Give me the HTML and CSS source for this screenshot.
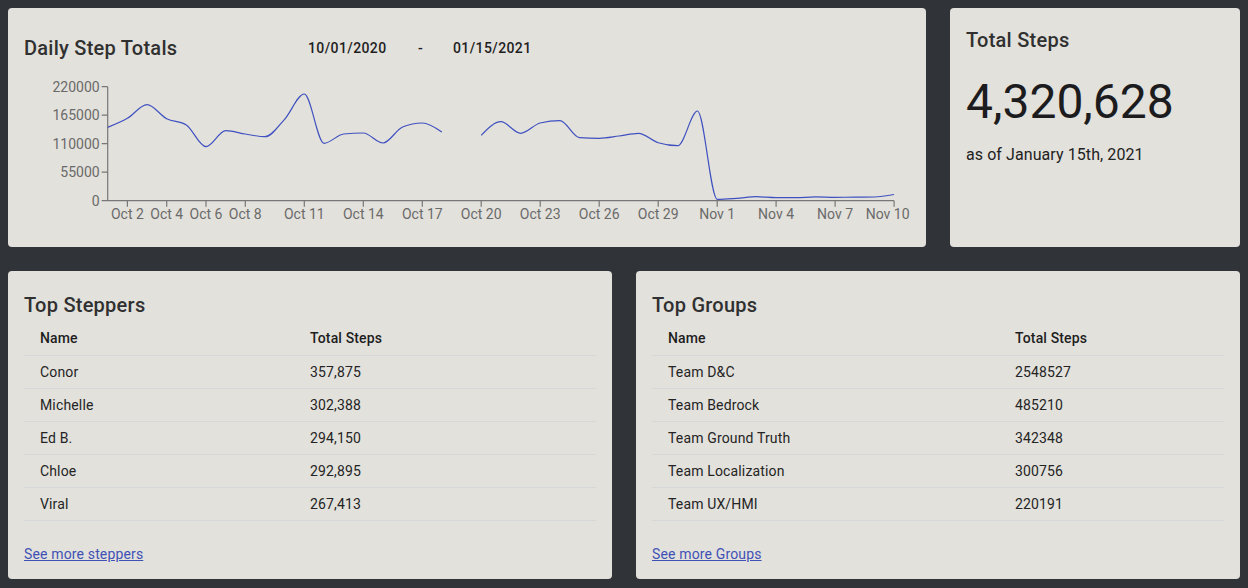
FILE: index.html
```html
<!DOCTYPE html>
<html lang="en">
<head>
<meta charset="utf-8">
<title>Step Dashboard</title>
<link rel="stylesheet" href="styles.css">
</head>
<body>
<main class="dash">
  <div class="row row-top">
    <section class="card card-chart">
      <header class="chart-head">
        <h2 class="card-title head-title">Daily Step Totals</h2>
        <div class="range">
          <span class="date date-from">10/01/2020</span>
          <span class="range-sep">-</span>
          <span class="date">01/15/2021</span>
        </div>
      </header>
      <svg class="chart" viewBox="8 60 918 187" width="918" height="187" xmlns="http://www.w3.org/2000/svg">
        <g class="axis">
          <line x1="107.7" y1="86.7" x2="107.7" y2="200.7"/>
          <line x1="107.7" y1="200.7" x2="894.1" y2="200.7"/>
          <line x1="101.7" y1="86.7" x2="107.7" y2="86.7"/>
          <line x1="101.7" y1="115.2" x2="107.7" y2="115.2"/>
          <line x1="101.7" y1="143.7" x2="107.7" y2="143.7"/>
          <line x1="101.7" y1="172.2" x2="107.7" y2="172.2"/>
          <line x1="101.7" y1="200.7" x2="107.7" y2="200.7"/>
          <line x1="127.4" y1="200.7" x2="127.4" y2="206.7"/>
          <line x1="166.7" y1="200.7" x2="166.7" y2="206.7"/>
          <line x1="206" y1="200.7" x2="206" y2="206.7"/>
          <line x1="245.3" y1="200.7" x2="245.3" y2="206.7"/>
          <line x1="304.3" y1="200.7" x2="304.3" y2="206.7"/>
          <line x1="363.3" y1="200.7" x2="363.3" y2="206.7"/>
          <line x1="422.3" y1="200.7" x2="422.3" y2="206.7"/>
          <line x1="481.2" y1="200.7" x2="481.2" y2="206.7"/>
          <line x1="540.2" y1="200.7" x2="540.2" y2="206.7"/>
          <line x1="599.2" y1="200.7" x2="599.2" y2="206.7"/>
          <line x1="658.2" y1="200.7" x2="658.2" y2="206.7"/>
          <line x1="717.2" y1="200.7" x2="717.2" y2="206.7"/>
          <line x1="776.1" y1="200.7" x2="776.1" y2="206.7"/>
          <line x1="835.1" y1="200.7" x2="835.1" y2="206.7"/>
          <line x1="894.1" y1="200.7" x2="894.1" y2="206.7"/>
        </g>
        <g class="ylabels">
          <text x="99.7" y="91.7">220000</text>
          <text x="99.7" y="120.2">165000</text>
          <text x="99.7" y="148.7">110000</text>
          <text x="99.7" y="177.2">55000</text>
          <text x="99.7" y="205.7">0</text>
        </g>
        <g class="xlabels">
          <text x="127.4" y="218.6">Oct 2</text>
          <text x="166.7" y="218.6">Oct 4</text>
          <text x="206" y="218.6">Oct 6</text>
          <text x="245.3" y="218.6">Oct 8</text>
          <text x="304.3" y="218.6">Oct 11</text>
          <text x="363.3" y="218.6">Oct 14</text>
          <text x="422.3" y="218.6">Oct 17</text>
          <text x="481.2" y="218.6">Oct 20</text>
          <text x="540.2" y="218.6">Oct 23</text>
          <text x="599.2" y="218.6">Oct 26</text>
          <text x="658.2" y="218.6">Oct 29</text>
          <text x="717.2" y="218.6">Nov 1</text>
          <text x="776.1" y="218.6">Nov 4</text>
          <text x="835.1" y="218.6">Nov 7</text>
          <text class="last" x="909.5" y="218.6">Nov 10</text>
        </g>
        <path class="line" d="M107.7 127.3 C114.25 124.68 120.85 122.07 127.4 118.3 S140.45 104.7 147 104.7 S160.15 115.32 166.7 118.7 S179.75 120.8 186.3 125 S199.45 146.7 206 146.7 S219.15 130.7 225.7 130.7 S238.75 133 245.3 134 S258.45 136.7 265 136.7 S278.05 126.42 284.6 119.3 S297.75 94 304.3 94 S317.45 143.3 324 143.3 S337.05 134.67 343.6 134 S356.75 133 363.3 133 S376.35 143 382.9 143 S396.05 129.67 402.6 127 S415.75 123 422.3 123 S435.35 127.5 441.9 132"/>
        <path class="line" d="M481.2 135.3 C487.75 128.5 494.35 121.7 500.9 121.7 S514.05 133.3 520.6 133.3 S533.65 124.53 540.2 123 S553.35 120.7 559.9 120.7 S572.95 137.3 579.5 137.7 S592.65 138.3 599.2 138.3 S612.35 136.83 618.9 136 S631.95 133.3 638.5 133.3 S651.65 140.7 658.2 142.7 S671.25 145.7 677.8 145.7 S690.95 111 697.5 111 S710.65 199.3 717.2 199.3 S730.25 198.73 736.8 198.3 S749.95 196.7 756.5 196.7 S769.55 197.7 776.1 197.7 S789.25 197.7 795.8 197.7 S808.95 196.9 815.5 196.9 S828.55 197.3 835.1 197.3 S848.25 197.25 854.8 197.2 S867.85 197.13 874.4 197 S887.55 195.68 894.1 194.5"/>
      </svg>
    </section>
    <section class="card card-total">
      <h2 class="card-title">Total Steps</h2>
      <div class="big-number">4,320,628</div>
      <div class="as-of">as of January 15th, 2021</div>
    </section>
  </div>
  <div class="row row-bottom">
    <section class="card card-table">
      <h2 class="card-title">Top Steppers</h2>
      <table class="rank">
        <colgroup><col class="col-steppers"><col></colgroup>
        <thead><tr><th>Name</th><th>Total Steps</th></tr></thead>
        <tbody>
          <tr><td>Conor</td><td>357,875</td></tr>
          <tr><td>Michelle</td><td>302,388</td></tr>
          <tr><td>Ed B.</td><td>294,150</td></tr>
          <tr><td>Chloe</td><td>292,895</td></tr>
          <tr><td>Viral</td><td>267,413</td></tr>
        </tbody>
      </table>
      <a class="more" href="#">See more steppers</a>
    </section>
    <section class="card card-table">
      <h2 class="card-title">Top Groups</h2>
      <table class="rank">
        <colgroup><col class="col-groups"><col></colgroup>
        <thead><tr><th>Name</th><th>Total Steps</th></tr></thead>
        <tbody>
          <tr><td>Team D&amp;C</td><td>2548527</td></tr>
          <tr><td>Team Bedrock</td><td>485210</td></tr>
          <tr><td>Team Ground Truth</td><td>342348</td></tr>
          <tr><td>Team Localization</td><td>300756</td></tr>
          <tr><td>Team UX/HMI</td><td>220191</td></tr>
        </tbody>
      </table>
      <a class="more" href="#">See more Groups</a>
    </section>
  </div>
</main>
</body>
</html>
```
FILE: styles.css
```css
html {
  background: #303337;
}
body {
  margin: 8px;
  font-family: Roboto, "Liberation Sans", sans-serif;
  color: #262626;
}
.dash {
  display: flex;
  flex-direction: column;
  gap: 24px;
}
.row {
  display: grid;
  gap: 24px;
}
.row-top {
  grid-template-columns: 918px 290px;
  height: 239px;
}
.row-bottom {
  grid-template-columns: 604px 604px;
  height: 308px;
}
.card {
  background: #e3e1dc;
  border-radius: 4px;
  overflow: hidden;
  box-sizing: border-box;
}
.card-title {
  margin: 0;
  font-size: 20px;
  line-height: 24px;
  font-weight: 500;
  letter-spacing: 0.25px;
  color: #303030;
}

/* chart card */
.chart-head {
  display: flex;
  align-items: center;
  padding: 28px 16px 0;
  height: 24px;
}
.head-title {
  width: 284px;
  flex: none;
}
.range {
  display: flex;
  align-items: center;
  font-size: 14px;
  line-height: 20px;
  font-weight: 500;
  letter-spacing: 0.4px;
  color: #1e1e1e;
}
.date-from {
  width: 110px;
}
.range-sep {
  width: 35px;
}
.chart {
  display: block;
}
.axis line {
  stroke: #777;
  stroke-width: 1.2;
}
.ylabels text,
.xlabels text {
  font-family: Roboto, "Liberation Sans", sans-serif;
  font-size: 14px;
  fill: #6a6a6a;
}
.ylabels text {
  text-anchor: end;
}
.xlabels text {
  text-anchor: middle;
}
.xlabels text.last {
  text-anchor: end;
}
.line {
  fill: none;
  stroke: #3f51c0;
  stroke-width: 1.2;
}

/* total card */
.card-total {
  padding: 20px 16px;
}
.big-number {
  margin-top: 22px;
  font-size: 48px;
  line-height: 56px;
  font-weight: 400;
  color: #1c1c1e;
}
.as-of {
  margin-top: 13px;
  font-size: 16px;
  line-height: 24px;
  letter-spacing: 0.08px;
  color: #222;
}

/* table cards */
.card-table {
  padding: 22px 16px 0;
}
.card-table .card-title {
  margin-bottom: 6px;
}
.rank {
  width: 100%;
  border-collapse: collapse;
  table-layout: fixed;
  font-size: 14px;
  line-height: 20px;
  letter-spacing: 0.15px;
  color: #242424;
}
.col-steppers {
  width: 270px;
}
.col-groups {
  width: 347px;
}
.rank th,
.rank td {
  text-align: left;
  padding: 6px 16px;
  border-bottom: 1px solid #d6d7d7;
}
.rank th {
  font-weight: 500;
  padding: 5px 16px 7px;
  color: #1e1e1e;
}
.rank td {
  font-weight: 400;
}
.more {
  display: inline-block;
  margin-top: 23px;
  font-size: 14px;
  line-height: 20px;
  letter-spacing: 0.15px;
  color: #3f51b5;
  text-decoration: underline;
}
```
